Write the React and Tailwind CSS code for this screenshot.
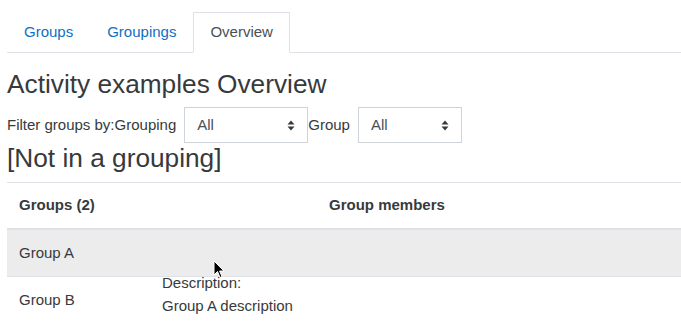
import { useState } from "react";

const tabs = [
  { label: "Groups", active: false },
  { label: "Groupings", active: false },
  { label: "Overview", active: true },
];

function Caret() {
  return (
    <svg width="8" height="11" viewBox="0 0 8 11" className="pointer-events-none absolute right-[13px] top-[13px]">
      <path d="M0.5 4.5 L4 0.5 L7.5 4.5 Z" fill="#343a40" />
      <path d="M0.5 6.5 L4 10.5 L7.5 6.5 Z" fill="#343a40" />
    </svg>
  );
}

function Select({ width, value, onChange }) {
  return (
    <div className="relative" style={{ width }}>
      <select
        value={value}
        onChange={(e) => onChange(e.target.value)}
        className="h-[36px] w-full appearance-none border border-[#ced4da] bg-white pl-[12px] pr-[36px] text-[15px] text-[#495057] outline-none"
      >
        <option value="all">All</option>
      </select>
      <Caret />
    </div>
  );
}

function Cursor() {
  return (
    <svg width="12" height="19" viewBox="0 0 12 19" className="pointer-events-none absolute left-[213px] top-[260px]">
      <path d="M1 1 L1 15 L4.5 11.5 L7 17.5 L9 16.6 L6.6 11 L11 11 Z" fill="#000" stroke="#fff" strokeWidth="1" />
    </svg>
  );
}

export default function App() {
  const [grouping, setGrouping] = useState("all");
  const [group, setGroup] = useState("all");

  return (
    <div className="relative h-[336px] w-[681px] overflow-hidden bg-white pl-[7px] pt-[12px] font-['Liberation_Sans',Arial,sans-serif] text-[15px] leading-[22.5px] text-[#373a3c]">
      <ul className="mb-[16px] flex border-b border-[#dee2e6]">
        {tabs.map((t) => (
          <li key={t.label} className="-mb-px">
            <a
              href="#"
              className={
                t.active
                  ? "block border border-[#dee2e6] border-b-white bg-white px-[16px] py-[8px] text-[#495057]"
                  : "block border border-transparent px-[16px] py-[8px] text-[#0f6fc5]"
              }
            >
              {t.label}
            </a>
          </li>
        ))}
      </ul>

      <h2 className="mb-[7px] text-[26.25px] leading-[31.5px]">Activity examples Overview</h2>

      <div className="flex items-center">
        <label className="mr-[8px]">Filter groups by:Grouping</label>
        <Select width="124px" value={grouping} onChange={setGrouping} />
        <label className="mr-[8px]">Group</label>
        <Select width="104px" value={group} onChange={setGroup} />
      </div>

      <h3 className="mb-[7px] text-[26.25px] leading-[31.5px]">[Not in a grouping]</h3>

      <table className="w-full border-collapse">
        <thead>
          <tr className="border-t border-[#dee2e6]">
            <th className="w-[310px] border-b-2 border-[#dee2e6] p-[11.25px] pl-[12px] text-left font-bold">Groups (2)</th>
            <th className="border-b-2 border-[#dee2e6] p-[11.25px] pl-[12px] text-left font-bold">Group members</th>
          </tr>
        </thead>
        <tbody>
          <tr className="bg-[#ececec]">
            <td className="border-t border-[#dee2e6] px-[12px] py-[12px]">Group A</td>
            <td className="border-t border-[#dee2e6] px-[12px] py-[12px]"></td>
          </tr>
          <tr>
            <td className="border-t border-[#dee2e6] px-[12px] py-[12px]">Group B</td>
            <td className="border-t border-[#dee2e6] px-[12px] py-[12px]"></td>
          </tr>
        </tbody>
      </table>

      <div className="absolute left-[162px] top-[272px]">
        <div>Description:</div>
        <div>Group A description</div>
      </div>

      <Cursor />
    </div>
  );
}
